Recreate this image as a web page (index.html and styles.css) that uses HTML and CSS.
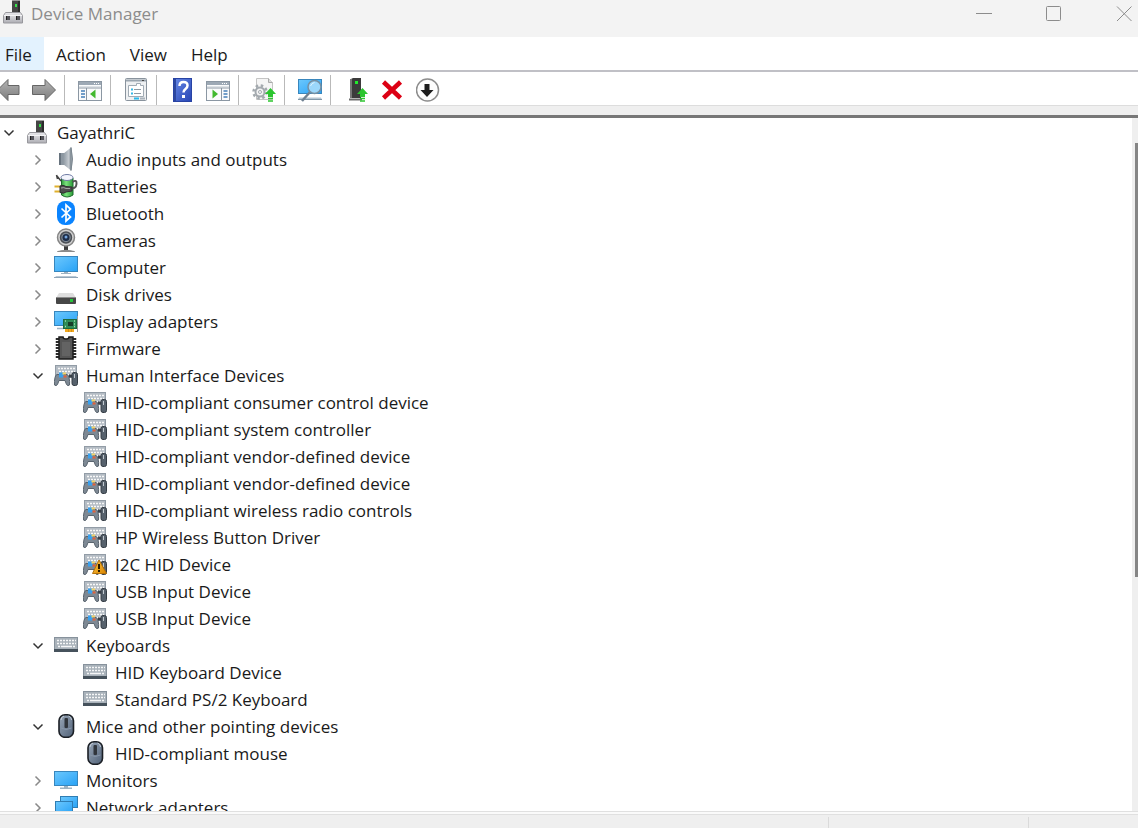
FILE: index.html
```html
<!DOCTYPE html>
<html lang="en">
<head>
	<meta charset="utf-8">
	<title>Device Manager</title>
	<link rel="stylesheet" href="styles.css">
</head>
<body>

	<!-- icons -->
	<svg class="sprite" aria-hidden="true">
		<defs>
			<linearGradient id="g-metal" x1="0" y1="0" x2="0" y2="1">
				<stop offset="0" stop-color="#e9e9ec"/><stop offset="1" stop-color="#aeaeb4"/>
			</linearGradient>
			<linearGradient id="g-arrow" x1="0" y1="0" x2="0" y2="1">
				<stop offset="0" stop-color="#b4b4b4"/><stop offset="1" stop-color="#7c7c7c"/>
			</linearGradient>
			<linearGradient id="g-screen" x1="0" y1="0" x2="1" y2="1">
				<stop offset="0" stop-color="#6cc8fc"/><stop offset="0.5" stop-color="#4bb5fa"/><stop offset="1" stop-color="#27a2f5"/>
			</linearGradient>
			<linearGradient id="g-cone" x1="0" y1="0" x2="1" y2="0">
				<stop offset="0" stop-color="#8a959f"/><stop offset="0.7" stop-color="#c3c9cf"/><stop offset="1" stop-color="#8c969f"/>
			</linearGradient>
			<linearGradient id="g-help" x1="0" y1="0" x2="1" y2="1">
				<stop offset="0" stop-color="#6789e6"/><stop offset="1" stop-color="#2745b4"/>
			</linearGradient>
			<linearGradient id="g-mouse" x1="0" y1="0" x2="1" y2="1">
				<stop offset="0" stop-color="#9aa8b8"/><stop offset="1" stop-color="#4f6077"/>
			</linearGradient>
			<linearGradient id="g-battery" x1="0" y1="0" x2="1" y2="0">
				<stop offset="0" stop-color="#2f9c3c"/><stop offset="0.4" stop-color="#7be37c"/><stop offset="1" stop-color="#2b9a38"/>
			</linearGradient>
			<linearGradient id="g-warn" x1="0" y1="0" x2="1" y2="1">
				<stop offset="0" stop-color="#ffc845"/><stop offset="1" stop-color="#d98400"/>
			</linearGradient>
		</defs>

		<symbol id="i-device" viewBox="0 0 24 24">
			<rect x="11" y="0.500" width="8" height="12" fill="#454545"/>
			<rect x="17" y="1" width="2" height="11" fill="#2b2b2b"/>
			<rect x="14" y="4" width="2" height="3" fill="#36e04a"/>
			<path d="M4.500 12.500h15l2 3v7.500h-19v-7.500z" fill="url(#g-metal)" stroke="#98989d"/>
			<path d="M3 15.500h18" stroke="#f5f5f6"/>
			<rect x="5" y="16" width="4" height="4" fill="#55555b"/>
			<rect x="15" y="16" width="4" height="4" fill="#55555b"/>
			<rect x="5" y="16" width="1" height="4" fill="#222"/>
			<rect x="15" y="16" width="1" height="4" fill="#222"/>
		</symbol>

		<symbol id="i-audio" viewBox="0 0 24 24">
			<rect x="5" y="6" width="6" height="12" fill="#8c97a1"/>
			<rect x="5" y="6" width="2" height="12" fill="#67737e"/>
			<path d="M9 7L17 0.500v23L9 17z" fill="url(#g-cone)"/>
			<path d="M17 0.500q3 11.500 0 23z" fill="#aab2b9" stroke="#7b868f"/>
		</symbol>

		<symbol id="i-battery" viewBox="0 0 24 24">
			<path d="M3 2l4 5M2.500 1l1 4" stroke="#444" stroke-width="1.500" fill="none"/>
			<path d="M7.500 4v17q5.500 4 11.500 0V4z" fill="url(#g-battery)" stroke="#1b6a28"/>
			<ellipse cx="13" cy="3.500" rx="6" ry="3" fill="#f3f5fc" stroke="#6f7ba4"/>
			<path d="M17 14q5 1 5.500-4t-4-2" stroke="#555" stroke-width="2" fill="none"/>
			<path d="M0.500 12.500h6M0.500 17.500h6" stroke="#e0b02d" stroke-width="2"/>
			<path d="M6 12q3-1.500 6 0.500l6 0.500v4l-6 1q-2 2-6 0.500z" fill="#4f4f4f" stroke="#303030"/>
			<path d="M7 14q3-1 5 0.500h4" stroke="#a5a5a5" fill="none"/>
		</symbol>

		<symbol id="i-bluetooth" viewBox="0 0 24 24">
			<rect x="3" y="0" width="18" height="24" rx="8" fill="#0a84ff"/>
			<path d="M7.500 7.500l9 8.500-4.500 4V4l4.500 4-9 8.500" fill="none" stroke="#fff" stroke-width="1.700"/>
		</symbol>

		<symbol id="i-camera" viewBox="0 0 24 24">
			<path d="M10 18h4v4h-4z" fill="#3c3c3c"/>
			<path d="M3.500 23.500q8.500-2.500 17 0z" fill="#777" stroke="#8a8a8a"/>
			<circle cx="12" cy="9.500" r="8.500" fill="#d0d0d0" stroke="#858585" stroke-width="1.500"/>
			<circle cx="12" cy="9.500" r="5.500" fill="#7d8792" stroke="#4b4f55" stroke-width="1.500"/>
			<circle cx="12" cy="9.500" r="3.500" fill="#1c2c48"/>
			<circle cx="12" cy="9" r="1.500" fill="#74a5df"/>
		</symbol>

		<symbol id="i-computer" viewBox="0 0 24 24">
			<rect x="0.500" y="1.500" width="23" height="15" fill="url(#g-screen)" stroke="#3886bd"/>
			<path d="M10 17h4v1h3v1H7v-1h3z" fill="#9fb3c2"/>
			<path d="M2 21h20l1.500 2h-23z" fill="#b9c7d4"/>
			<path d="M0 22.500h24" stroke="#8fa5b7"/>
		</symbol>

		<symbol id="i-disk" viewBox="0 0 24 24">
			<path d="M5 11h14l3 5H2z" fill="#dedede"/>
			<rect x="2" y="15" width="20" height="7" rx="1" fill="#474747"/>
			<path d="M2 15.500h20" stroke="#8b8b8b"/>
			<rect x="16" y="17" width="3" height="3" fill="#25c53b"/>
		</symbol>

		<symbol id="i-display" viewBox="0 0 24 24">
			<rect x="0.500" y="2.500" width="23" height="14" fill="url(#g-screen)" stroke="#3886bd"/>
			<path d="M3 19.500h7" stroke="#9fb3c2" stroke-width="1.500"/>
			<rect x="9.500" y="10.500" width="13" height="9" fill="#2f8c57" stroke="#1d6b3d"/>
			<rect x="14" y="13" width="5" height="4" fill="#173d28"/>
			<path d="M11 12h1M20 12h1M20 15h1M11 17.500h1M20 17.500h1" stroke="#9be0ae" stroke-width="1.500"/>
			<rect x="11" y="20" width="9" height="3" fill="#f2a91f"/>
			<path d="M14.500 20v3M17.500 20v3" stroke="#cf8f1a"/>
			<path d="M23.500 7v16" stroke="#9a9a9a"/>
		</symbol>

		<symbol id="i-firmware" viewBox="0 0 24 24">
			<path d="M3.500 2v21M20.500 2v21" stroke="#2b2b2b" stroke-width="3.500" stroke-dasharray="2 1"/>
			<path d="M5 1h4q0 2 3 2t3-2h4v22H5z" fill="#555" stroke="#1c1c1c" stroke-width="1.500"/>
			<path d="M8 6h8v14H8z" fill="#636363"/>
		</symbol>

		<symbol id="i-hid" viewBox="0 0 24 24">
			<rect x="1.500" y="2.500" width="21" height="12" fill="#b4bcc4" stroke="#929ca6"/>
			<path d="M4 5.500h17M5 8.500h16M4 11.500h17" stroke="#f8f8f8" stroke-width="1.500" stroke-dasharray="2 1"/>
			<path d="M3 11.500h3l1-1h2l1 1h3q1.500 0.500 2 3 1 4 0.500 7.500-1.500 1.500-3-0.500l-1.500-4H5l-1.500 4q-1.500 2-3 0.500Q0 18.500 1 14.500q0.500-2.500 2-3z" fill="#7e8994" stroke="#59646e"/>
			<path d="M5 9.500h4.500v5H5z" fill="#39a0ee"/>
			<path d="M8.500 9.500H12v2H8.500z" fill="#f5d469"/>
			<path d="M9.500 12.500h3v2h-3z" fill="#e2603a"/>
			<path d="M15 13h3" stroke="#3a4148" stroke-width="3"/>
			<rect x="18" y="9.500" width="5.500" height="13" rx="2" fill="#56616c" stroke="#343c44"/>
			<path d="M20.500 11v4" stroke="#c2c9cf"/>
		</symbol>

		<symbol id="i-hid-warn" viewBox="0 0 24 24">
			<use href="#i-hid" width="24" height="24"/>
			<path d="M16 8l7.500 13.500h-14z" fill="url(#g-warn)" stroke="#b67208" stroke-linejoin="round"/>
			<path d="M16 12v5M16 18v2" stroke="#2b1b00" stroke-width="2"/>
		</symbol>

		<symbol id="i-keyboard" viewBox="0 0 24 24">
			<rect x="0.500" y="4.500" width="23" height="12" fill="#a9b2ba" stroke="#87929c"/>
			<path d="M3 7.500h19M3 10.500h19M4 13.500h2M19 13.500h3" stroke="#f6f7f8" stroke-width="1.500" stroke-dasharray="2 1"/>
			<path d="M7 13.500h11" stroke="#f6f7f8" stroke-width="1.500"/>
			<rect x="0" y="16" width="24" height="3" fill="#46525c"/>
		</symbol>

		<symbol id="i-mouse" viewBox="0 0 24 24">
			<rect x="5" y="0.800" width="14.500" height="22.500" rx="6" fill="url(#g-mouse)" stroke="#1b1f25" stroke-width="1.600"/>
			<path d="M7 6q0-3 3-4M17.500 6q0-3-3-4" stroke="#c5ced8" fill="none"/>
			<rect x="10.500" y="4" width="3.500" height="10" rx="1" fill="#30353b"/>
			<path d="M7 14q5 3 10.500 0" stroke="#8796a8" fill="none"/>
		</symbol>

		<symbol id="i-monitor" viewBox="0 0 24 24">
			<rect x="0.500" y="3.500" width="23" height="14" fill="url(#g-screen)" stroke="#3886bd"/>
			<path d="M10 18h4v1.500h4v1.500H6v-1.500h4z" fill="#9fb3c2"/>
		</symbol>

		<symbol id="i-network" viewBox="0 0 24 24">
			<rect x="6.500" y="1.500" width="17" height="11" fill="url(#g-screen)" stroke="#2f7db3"/>
			<rect x="1.500" y="6.500" width="17" height="12" fill="url(#g-screen)" stroke="#2f7db3"/>
			<path d="M7 21h8" stroke="#9fb3c2" stroke-width="2"/>
		</symbol>

		<symbol id="i-window" viewBox="0 0 24 24">
			<rect x="0.500" y="3.500" width="23" height="19" fill="#fafbfc" stroke="#8b97a3"/>
			<rect x="1" y="4" width="22" height="3" fill="#9da9b5"/>
			<path d="M1 8.500h22" stroke="#dde2e7"/>
			<path d="M16 5.500h1M18 5.500h1M20 5.500h1" stroke="#fff"/>
			<path d="M1 10h22" stroke="#8b97a3"/>
		</symbol>

		<symbol id="i-up" viewBox="0 0 11 14">
			<path d="M5.500 0l5.500 6H8v3H3V6H0z" fill="#2cc52f"/>
			<path d="M3 10.500h5M3 13h5" stroke="#2cc52f" stroke-width="1.500"/>
		</symbol>
	</svg>

	<header class="titlebar">
		<svg class="icon"><use href="#i-device"/></svg>
		<h1 class="title">Device Manager</h1>
		<div class="window-controls">
			<button type="button" aria-label="Minimize"><svg viewBox="0 0 16 16"><path d="M0 7.500h16"/></svg></button>
			<button type="button" aria-label="Maximize"><svg viewBox="0 0 16 16"><rect x="0.500" y="0.500" width="14" height="14" rx="1"/></svg></button>
			<button type="button" aria-label="Close"><svg viewBox="0 0 16 16"><path d="M1 0.500l14.500 14.500M15.500 0.500L1 15"/></svg></button>
		</div>
	</header>

	<nav class="menubar">
		<button type="button" class="active">File</button>
		<button type="button">Action</button>
		<button type="button">View</button>
		<button type="button">Help</button>
	</nav>

	<div class="toolbar">
		<button type="button" class="back" aria-label="Back">
			<svg viewBox="3 0 20 24"><path d="M0.500 12L11 1.500v6h11v9H11v6z" fill="url(#g-arrow)" stroke="#666"/></svg>
		</button>
		<button type="button" aria-label="Forward">
			<svg viewBox="0 0 24 24"><path d="M23.500 12L13 1.500v6H0.500v9H13v6z" fill="url(#g-arrow)" stroke="#666"/></svg>
		</button>
		<span class="separator"></span>
		<button type="button" aria-label="Show/Hide Console Tree">
			<svg viewBox="0 0 24 24">
				<use href="#i-window" width="24" height="24"/>
				<path d="M8.500 10v12" stroke="#8b97a3"/>
				<path d="M3 13h4M3 16h4M3 19h4" stroke="#4580b8" stroke-width="1.500"/>
				<path d="M17.500 11.500v9L12 16z" fill="#42b92f"/>
			</svg>
		</button>
		<span class="separator"></span>
		<button type="button" aria-label="Properties">
			<svg viewBox="0 0 24 24">
				<rect x="1.500" y="0.500" width="21" height="22" rx="1" fill="#eef0f2" stroke="#89939d"/>
				<path d="M2 2.500h20" stroke="#9aa5af" stroke-width="2"/>
				<path d="M18 2.500h2" stroke="#444"/>
				<path d="M4.500 7.500h8v-2h4v2h3v11h-15z" fill="#fff" stroke="#a1abb4"/>
				<path d="M7 11.500h2M7 15.500h2" stroke="#36b8e6" stroke-width="2"/>
				<path d="M10 11.500h7M10 15.500h7" stroke="#8e99a3"/>
				<path d="M10 20.500h5" stroke="#27b8ea" stroke-width="2"/>
				<path d="M16 20.500h5" stroke="#aab3bb" stroke-width="2"/>
			</svg>
		</button>
		<span class="separator"></span>
		<button type="button" aria-label="Help contents">
			<svg viewBox="0 0 24 24">
				<rect x="3.500" y="0.500" width="18" height="23" fill="url(#g-help)" stroke="#2843a4"/>
				<path d="M5 1v22" stroke="#2c479f" stroke-width="2"/>
				<path d="M9.500 8q0-4 4-4t4 3.500q0 2-2 3.500t-2 3.500" fill="none" stroke="#fff" stroke-width="2.500"/>
				<rect x="12" y="17" width="3" height="3" fill="#fff"/>
			</svg>
		</button>
		<button type="button" aria-label="Show/Hide Action Pane">
			<svg viewBox="0 0 24 24">
				<use href="#i-window" width="24" height="24"/>
				<path d="M15.500 10v12" stroke="#8b97a3"/>
				<path d="M17.500 13h4M17.500 16h4M17.500 19h4" stroke="#4580b8" stroke-width="1.500"/>
				<path d="M6.500 11.500v9L12 16z" fill="#42b92f"/>
			</svg>
		</button>
		<span class="separator"></span>
		<button type="button" aria-label="Update driver">
			<svg viewBox="0 0 24 24">
				<path d="M4.500 0.500h12l4 4v17h-16z" fill="#f5f5f5" stroke="#c4c4c4"/>
				<path d="M16.500 0.500v4h4" fill="#ddd" stroke="#aaa"/>
				<circle cx="8" cy="14" r="6.500" fill="none" stroke="#a3a9ae" stroke-width="2.500" stroke-dasharray="2.500 2.600"/>
				<circle cx="8" cy="14" r="4.500" fill="#f3f3f3" stroke="#a3a9ae" stroke-width="2"/>
				<circle cx="8" cy="14" r="1.500" fill="#fff" stroke="#a3a9ae"/>
				<use href="#i-up" x="13" y="10" width="11" height="14"/>
			</svg>
		</button>
		<span class="separator"></span>
		<button type="button" aria-label="Scan for hardware changes">
			<svg viewBox="0 0 24 24">
				<rect x="0.500" y="1.500" width="23" height="14" fill="url(#g-screen)" stroke="#3886bd"/>
				<path d="M1 19.500h22l1 2H0z" fill="#b6c6d2"/>
				<path d="M0 21.500h24" stroke="#8197a8"/>
				<path d="M12 14l-8 9" stroke="#6f8192" stroke-width="2.500"/>
				<circle cx="16.500" cy="9" r="6.500" fill="#9bd7fb" stroke="#7690a3" stroke-width="1.500"/>
				<path d="M12.500 8q1-3 4-3.500" stroke="#dff3ff" fill="none"/>
			</svg>
		</button>
		<span class="separator"></span>
		<button type="button" aria-label="Add drivers">
			<svg viewBox="0 0 24 24">
				<path d="M7 1l2-1h8v20H7z" fill="#3b3b3b"/>
				<path d="M7 1v19" stroke="#777" stroke-width="2"/>
				<rect x="11" y="3" width="3" height="3" fill="#21ec2d"/>
				<path d="M5 21.500h13" stroke="#6c6c6c" stroke-width="2"/>
				<use href="#i-up" x="13" y="10" width="11" height="14"/>
			</svg>
		</button>
		<button type="button" aria-label="Uninstall device">
			<svg viewBox="0 0 24 24"><path d="M3.500 4l17 16M20.500 4l-17 16" stroke="#dc0014" stroke-width="4.500"/></svg>
		</button>
		<button type="button" aria-label="Disable device">
			<svg viewBox="0 0 24 24">
				<circle cx="11.500" cy="12" r="11" fill="#fdfdfd" stroke="#8d8d8d" stroke-width="1.500"/>
				<path d="M8.500 6h5v6h4l-6.500 7-6.500-7h4z" fill="#1d1d1d"/>
			</svg>
		</button>
	</div>

	<main class="content">
		<div class="tree">
			<details open>
				<summary><svg class="chevron" viewBox="0 0 18 18"><path d="M6.500 4.500L11 9l-4.500 4.500"/></svg><svg class="icon"><use href="#i-device"/></svg>GayathriC</summary>
				<div class="branch">
					<details>
						<summary><svg class="chevron" viewBox="0 0 18 18"><path d="M6.500 4.500L11 9l-4.500 4.500"/></svg><svg class="icon"><use href="#i-audio"/></svg>Audio inputs and outputs</summary>
					</details>
					<details>
						<summary><svg class="chevron" viewBox="0 0 18 18"><path d="M6.500 4.500L11 9l-4.500 4.500"/></svg><svg class="icon"><use href="#i-battery"/></svg>Batteries</summary>
					</details>
					<details>
						<summary><svg class="chevron" viewBox="0 0 18 18"><path d="M6.500 4.500L11 9l-4.500 4.500"/></svg><svg class="icon"><use href="#i-bluetooth"/></svg>Bluetooth</summary>
					</details>
					<details>
						<summary><svg class="chevron" viewBox="0 0 18 18"><path d="M6.500 4.500L11 9l-4.500 4.500"/></svg><svg class="icon"><use href="#i-camera"/></svg>Cameras</summary>
					</details>
					<details>
						<summary><svg class="chevron" viewBox="0 0 18 18"><path d="M6.500 4.500L11 9l-4.500 4.500"/></svg><svg class="icon"><use href="#i-computer"/></svg>Computer</summary>
					</details>
					<details>
						<summary><svg class="chevron" viewBox="0 0 18 18"><path d="M6.500 4.500L11 9l-4.500 4.500"/></svg><svg class="icon"><use href="#i-disk"/></svg>Disk drives</summary>
					</details>
					<details>
						<summary><svg class="chevron" viewBox="0 0 18 18"><path d="M6.500 4.500L11 9l-4.500 4.500"/></svg><svg class="icon"><use href="#i-display"/></svg>Display adapters</summary>
					</details>
					<details>
						<summary><svg class="chevron" viewBox="0 0 18 18"><path d="M6.500 4.500L11 9l-4.500 4.500"/></svg><svg class="icon"><use href="#i-firmware"/></svg>Firmware</summary>
					</details>
					<details open>
						<summary><svg class="chevron" viewBox="0 0 18 18"><path d="M6.500 4.500L11 9l-4.500 4.500"/></svg><svg class="icon"><use href="#i-hid"/></svg>Human Interface Devices</summary>
						<ul class="devices">
							<li><svg class="icon"><use href="#i-hid"/></svg>HID-compliant consumer control device</li>
							<li><svg class="icon"><use href="#i-hid"/></svg>HID-compliant system controller</li>
							<li><svg class="icon"><use href="#i-hid"/></svg>HID-compliant vendor-defined device</li>
							<li><svg class="icon"><use href="#i-hid"/></svg>HID-compliant vendor-defined device</li>
							<li><svg class="icon"><use href="#i-hid"/></svg>HID-compliant wireless radio controls</li>
							<li><svg class="icon"><use href="#i-hid"/></svg>HP Wireless Button Driver</li>
							<li><svg class="icon"><use href="#i-hid-warn"/></svg>I2C HID Device</li>
							<li><svg class="icon"><use href="#i-hid"/></svg>USB Input Device</li>
							<li><svg class="icon"><use href="#i-hid"/></svg>USB Input Device</li>
						</ul>
					</details>
					<details open>
						<summary><svg class="chevron" viewBox="0 0 18 18"><path d="M6.500 4.500L11 9l-4.500 4.500"/></svg><svg class="icon"><use href="#i-keyboard"/></svg>Keyboards</summary>
						<ul class="devices">
							<li><svg class="icon"><use href="#i-keyboard"/></svg>HID Keyboard Device</li>
							<li><svg class="icon"><use href="#i-keyboard"/></svg>Standard PS/2 Keyboard</li>
						</ul>
					</details>
					<details open>
						<summary><svg class="chevron" viewBox="0 0 18 18"><path d="M6.500 4.500L11 9l-4.500 4.500"/></svg><svg class="icon"><use href="#i-mouse"/></svg>Mice and other pointing devices</summary>
						<ul class="devices">
							<li><svg class="icon"><use href="#i-mouse"/></svg>HID-compliant mouse</li>
						</ul>
					</details>
					<details>
						<summary><svg class="chevron" viewBox="0 0 18 18"><path d="M6.500 4.500L11 9l-4.500 4.500"/></svg><svg class="icon"><use href="#i-monitor"/></svg>Monitors</summary>
					</details>
					<details>
						<summary><svg class="chevron" viewBox="0 0 18 18"><path d="M6.500 4.500L11 9l-4.500 4.500"/></svg><svg class="icon"><use href="#i-network"/></svg>Network adapters</summary>
					</details>
				</div>
			</details>
		</div>
		<div class="scrollbar"><div class="thumb"></div></div>
	</main>

	<footer class="statusbar">
		<span class="message"></span>
		<span class="progress"></span>
		<span class="state"></span>
	</footer>

</body>
</html>
```

FILE: styles.css
```css
*{
	box-sizing: border-box;
}
body{
	margin: 0;
	height: 100vh;
	display: flex;
	flex-direction: column;
	overflow: hidden;
	background-color: #fff;
	color: #1a1a1a;
	font: 17px/27px "Open Sans", "Noto Sans", sans-serif;
}
button{
	margin: 0;
	padding: 0;
	border: 0;
	background: none;
	color: inherit;
	font: inherit;
}
svg{
	display: block;
	flex: none;
}
.sprite{
	position: absolute;
	width: 0;
	height: 0;
}
.icon{
	width: 24px;
	height: 24px;
}

/* title bar */
.titlebar{
	flex: none;
	display: flex;
	align-items: flex-start;
	height: 37px;
	padding: 0 6px 0 1px;
	background-color: #f3f3f3;
	color: #8c8c8c;
}
.title{
	margin: 0 0 0 6px;
	font-size: 17px;
	font-weight: normal;
}
.window-controls{
	display: flex;
	gap: 54px;
	margin-left: auto;
	padding-top: 6px;
}
.window-controls svg{
	width: 16px;
	height: 16px;
	fill: none;
	stroke: #8c8c8c;
}

/* menu */
.menubar{
	flex: none;
	display: flex;
	height: 35px;
	border-bottom: 2px solid #c0c0c6;
}
.menubar button{
	padding: 2px 12px 0;
}
.menubar .active{
	padding-left: 5px;
	background-color: #e3f2fe;
}

/* toolbar */
.toolbar{
	flex: none;
	display: flex;
	align-items: center;
	height: 46px;
	padding-bottom: 8px;
	border-bottom: 3px solid #777;
	background: linear-gradient(#fff 33px, #ddd 33px, #ddd 34px, #efefef 34px);
}
.toolbar svg{
	width: 24px;
	height: 24px;
}
.toolbar .back svg{
	width: 20px;
}
.toolbar button + button{
	margin-left: 12px;
}
.separator{
	width: 1px;
	height: 30px;
	margin: 0 13px 0 8px;
	background-color: #b9b9b9;
}

/* device tree */
.content{
	flex: 1;
	min-height: 0;
	display: flex;
}
.tree{
	flex: 1;
	padding-top: 1px;
	overflow: hidden;
	white-space: nowrap;
}
.tree summary,
.devices li{
	display: flex;
	align-items: center;
	height: 27px;
}
.tree summary{
	list-style: none;
}
.tree .icon{
	margin: 0 8px 2px 0;
}
.branch{
	padding-left: 29px;
}
.devices{
	margin: 0;
	padding: 0 0 0 54px;
	list-style: none;
}
.chevron{
	width: 18px;
	height: 18px;
	margin-right: 7px;
	fill: none;
	stroke: #8a8a8a;
	stroke-width: 1.5;
}
details[open] > summary > .chevron{
	stroke: #333;
	transform: rotate(90deg);
}
.scrollbar{
	width: 6px;
	padding: 25px 0 0 3px;
	background-color: #efefef;
}
.thumb{
	height: 65%;
	background-color: #858585;
}

/* status bar */
.statusbar{
	flex: none;
	display: flex;
	height: 17px;
	padding-top: 6px;
	background: linear-gradient(#e0e0e0 1px, #fafafa 1px, #fafafa 3px, #e0e0e0 3px, #e0e0e0 4px, #efefef 4px);
}
.message{
	flex: 1;
}
.progress{
	width: 200px;
	border-left: 1px solid #dadada;
}
.state{
	width: 110px;
	border-left: 1px solid #dadada;
}
```
